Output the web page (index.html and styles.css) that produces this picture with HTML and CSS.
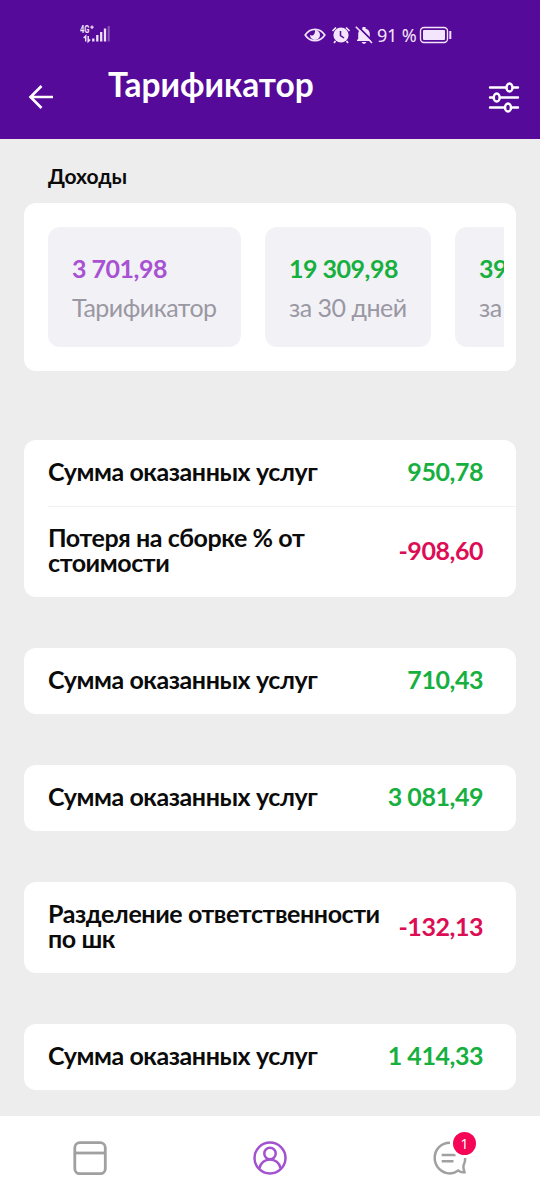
FILE: index.html
```html
<!DOCTYPE html>
<html lang="ru">
<head>
    <meta charset="UTF-8">
    <meta name="viewport" content="width=device-width, initial-scale=1.0">
    <title>Тарификатор</title>
    <link rel="stylesheet" href="styles.css">
</head>
<body>
    <header class="header">
        <div class="status">
            <svg class="signal" width="32" height="20" viewBox="0 0 32 20">
                <text class="net" x="0" y="9" textLength="9.500" lengthAdjust="spacingAndGlyphs">4G</text>
                <path d="M10.300 3.200h3.400M12 1.500v3.400" stroke="#efe0fa" stroke-width="1.300"/>
                <path d="M5.700 17.500v-5.500l-2 2M8.200 12v5.500l2-2" fill="none" stroke="#efe0fa" stroke-width="1.500"/>
                <path d="M13.300 17.500v-3M17.300 17.500v-6.500M21.200 17.500V8M25 17.500V4.500" stroke="#efe0fa" stroke-width="2.300"/>
                <path d="M28.700 17.500V2" stroke="#efe0fa" stroke-width="2" opacity=".35"/>
            </svg>
            <div class="status-right">
                <svg width="22" height="18" viewBox="0 0 22 18">
                    <path d="M1.200 9C6 1.500 16 1.500 20.800 9C16 16.500 6 16.500 1.200 9z" fill="none" stroke="#f3e5fb" stroke-width="1.700"/>
                    <path d="M11 4A5 5 0 1 1 6 9c2.500 1.500 5.500-.500 5-5z" fill="#f3e5fb"/>
                </svg>
                <svg width="20" height="18" viewBox="0 0 20 18">
                    <circle cx="10" cy="9" r="7.600" fill="#f3e5fb"/>
                    <path d="M1.500 5l3.500-3.500M18.500 5L15 1.500M4.500 15l-1.500 2M15.500 15l1.500 2" stroke="#f3e5fb" stroke-width="1.700"/>
                    <path d="M9.500 5v4.500l3.500 2.500" fill="none" stroke="#560a99" stroke-width="1.500"/>
                </svg>
                <svg class="bell" width="18" height="18" viewBox="0 0 18 18">
                    <path d="M3.200 13V8c0-3 2-5 4.300-5.500V1h3v1.500C12.800 3 14.800 5 14.800 8v5l1.200 1v1H2v-1zM6.500 16h5l-1.500 1.800H8z" fill="#f3e5fb"/>
                    <path d="M2.500 0L18 15.500" stroke="#560a99" stroke-width="1.800"/>
                    <path d="M.800 .800L17 17" stroke="#f3e5fb" stroke-width="1.600"/>
                </svg>
                <span class="percent">91 %</span>
                <svg width="34" height="18" viewBox="0 0 34 18">
                    <rect x="1.500" y="1.500" width="27" height="15" rx="3.500" fill="none" stroke="#f3e5fb" stroke-width="1.400"/>
                    <rect x="4" y="4" width="22" height="10" rx="1" fill="#f3e5fb"/>
                    <path d="M31.300 5v8" stroke="#f3e5fb" stroke-width="2"/>
                </svg>
            </div>
        </div>
        <div class="titlebar">
            <svg class="back" width="26" height="26" viewBox="0 0 26 26">
                <path d="M25 13H2.500M13.500 2L2.500 13l11 11" fill="none" stroke="#fff" stroke-width="2.600"/>
            </svg>
            <h1 class="title">Тарификатор</h1>
            <svg class="filter" width="32" height="32" viewBox="0 0 32 32">
                <g fill="none" stroke="#fff" stroke-width="2.400" stroke-linecap="round">
                    <path d="M2 6.500h16M25 6.500h5M2 16.500h3M12 16.500h18M2 26.500h15M24 26.500h6"/>
                    <ellipse cx="21.500" cy="6.500" rx="3" ry="4"/>
                    <ellipse cx="8.700" cy="16.500" rx="3" ry="4"/>
                    <ellipse cx="20" cy="26.500" rx="3" ry="4"/>
                </g>
            </svg>
        </div>
    </header>

    <main class="main">
        <h2 class="subtitle">Доходы</h2>
        <div class="card summary">
            <div class="tiles">
                <div class="tile first">
                    <div class="sum purple">3 701,98</div>
                    <div class="label">Тарификатор</div>
                </div>
                <div class="tile">
                    <div class="sum green">19 309,98</div>
                    <div class="label">за 30 дней</div>
                </div>
                <div class="tile">
                    <div class="sum green">39</div>
                    <div class="label">за</div>
                </div>
            </div>
        </div>

        <div class="list">
            <div class="card">
                <div class="row">
                    <span class="name">Сумма оказанных услуг</span>
                    <span class="value green">950,78</span>
                </div>
                <div class="row two">
                    <span class="name">Потеря на сборке % от<br>стоимости</span>
                    <span class="value red">-908,60</span>
                </div>
            </div>
            <div class="card">
                <div class="row">
                    <span class="name">Сумма оказанных услуг</span>
                    <span class="value green">710,43</span>
                </div>
            </div>
            <div class="card">
                <div class="row">
                    <span class="name">Сумма оказанных услуг</span>
                    <span class="value green">3 081,49</span>
                </div>
            </div>
            <div class="card">
                <div class="row two">
                    <span class="name">Разделение ответственности<br>по шк</span>
                    <span class="value red">-132,13</span>
                </div>
            </div>
            <div class="card">
                <div class="row">
                    <span class="name">Сумма оказанных услуг</span>
                    <span class="value green">1 414,33</span>
                </div>
            </div>
        </div>
    </main>

    <nav class="nav">
        <div class="tab">
            <svg width="34" height="34" viewBox="0 0 34 34">
                <g fill="none" stroke="#a0a0a0" stroke-width="2.800">
                    <rect x="1.800" y="1.700" width="30.500" height="31" rx="5"/>
                    <path d="M2 12h30"/>
                </g>
            </svg>
        </div>
        <div class="tab">
            <svg width="34" height="34" viewBox="0 0 34 34">
                <g fill="none" stroke="#a352cf" stroke-width="2.500">
                    <circle cx="17" cy="17" r="15.500"/>
                    <circle cx="17" cy="12.500" r="5.700"/>
                    <path d="M6.300 27.500C8.500 15.500 25.500 15.500 27.700 27.500"/>
                </g>
            </svg>
        </div>
        <div class="tab">
            <div class="chat">
                <svg width="34" height="34" viewBox="0 0 34 34">
                    <g fill="none" stroke="#a0a0a0" stroke-width="2.500">
                        <path d="M17 1.700C8 1.700 1.700 8.500 1.700 17S8.500 32.400 17 32.400c3.200 0 5.800-.900 8.300-2.800 1.800 1.500 4 2 6.200 1.600-.700-2.200-1.500-4-1-6.700 1.200-2.300 1.700-4.800 1.700-7.500"/>
                        <path d="M8.700 14h14M8.700 20.300h11.800"/>
                    </g>
                </svg>
                <span class="badge">1</span>
            </div>
        </div>
    </nav>
</body>
</html>
```

FILE: styles.css
```css
*{
    box-sizing: border-box;
}
body{
    margin: 0;
    width: 540px;
    height: 1200px;
    display: flex;
    flex-direction: column;
    background-color: #ededed;
    font-family: Lato, "Liberation Sans", sans-serif;
    color: #0b0b0b;
    overflow: hidden;
}
svg{
    display: block;
    flex: none;
}
.header{
    height: 139px;
    flex: none;
    background-color: #560a99;
    color: #fff;
}
.status{
    height: 70px;
    padding: 24px 87px 0 80px;
    display: flex;
    justify-content: space-between;
    align-items: flex-start;
}
.net{
    font: bold 10.5px Roboto, sans-serif;
    fill: #efe0fa;
}
.status-right{
    display: flex;
    align-items: center;
    gap: 5px;
    height: 21px;
}
.bell{
    margin-left: -1px;
}
.percent{
    width: 40px;
    font: 18px/21px "Noto Sans", sans-serif;
    letter-spacing: -0.2px;
    white-space: nowrap;
    color: #f3e5fb;
    margin: 2px -3px 0 -1px;
}
.titlebar{
    display: flex;
    padding: 0 20px 0 28px;
}
.back{
    margin-top: 14px;
}
.title{
    margin: -5px 0 0 54px;
    font-size: 33.5px;
    line-height: 38px;
    font-weight: bold;
}
.filter{
    margin: 11px 0 0 auto;
}
.main{
    flex: 1;
    padding: 0 24px;
}
.subtitle{
    margin: 24px 0 14px 24px;
    font-size: 21px;
    line-height: 26px;
    font-weight: bold;
}
.card{
    background-color: #fff;
    border-radius: 12px;
}
.summary{
    height: 168px;
    padding: 24px 12px 24px 24px;
}
.tiles{
    display: flex;
    gap: 24.5px;
    overflow: hidden;
}
.tile{
    flex: none;
    width: 165.500px;
    height: 120px;
    padding: 25px 24px;
    border-radius: 12px;
    background-color: #f2f1f6;
    white-space: nowrap;
}
.tile.first{
    width: 192.5px;
}
.sum{
    font-size: 25px;
    line-height: 32px;
    font-weight: bold;
    letter-spacing: -0.5px;
}
.label{
    margin-top: 7px;
    font-size: 25px;
    line-height: 32px;
    letter-spacing: -0.5px;
    color: #9a98a3;
}
.purple{
    color: #a852d3;
}
.green{
    color: #17b03f;
}
.red{
    color: #dc0d54;
}
.list{
    margin-top: 69px;
    display: flex;
    flex-direction: column;
    gap: 51px;
}
.row{
    height: 66px;
    margin-left: 24px;
    padding: 0 33px 4px 0;
    display: flex;
    justify-content: space-between;
    align-items: center;
}
.row.two{
    height: 91px;
}
.row + .row{
    border-top: 1px solid #f1f1f1;
}
.name{
    font-size: 25px;
    line-height: 25px;
    font-weight: bold;
    letter-spacing: -0.42px;
    white-space: nowrap;
}
.value{
    font-size: 25px;
    line-height: 30px;
    font-weight: bold;
    letter-spacing: -0.45px;
}
.nav{
    height: 84px;
    flex: none;
    display: flex;
    background-color: #fff;
}
.tab{
    flex: 1;
    display: flex;
    justify-content: center;
    padding-top: 25px;
}
.chat{
    position: relative;
    height: 34px;
}
.badge{
    position: absolute;
    left: 17px;
    top: -12px;
    width: 29px;
    height: 29px;
    border: 3px solid #fff;
    border-radius: 50%;
    background-color: #f50556;
    color: #fff;
    font: 14px/23px "Noto Sans", sans-serif;
    text-align: center;
}
```
